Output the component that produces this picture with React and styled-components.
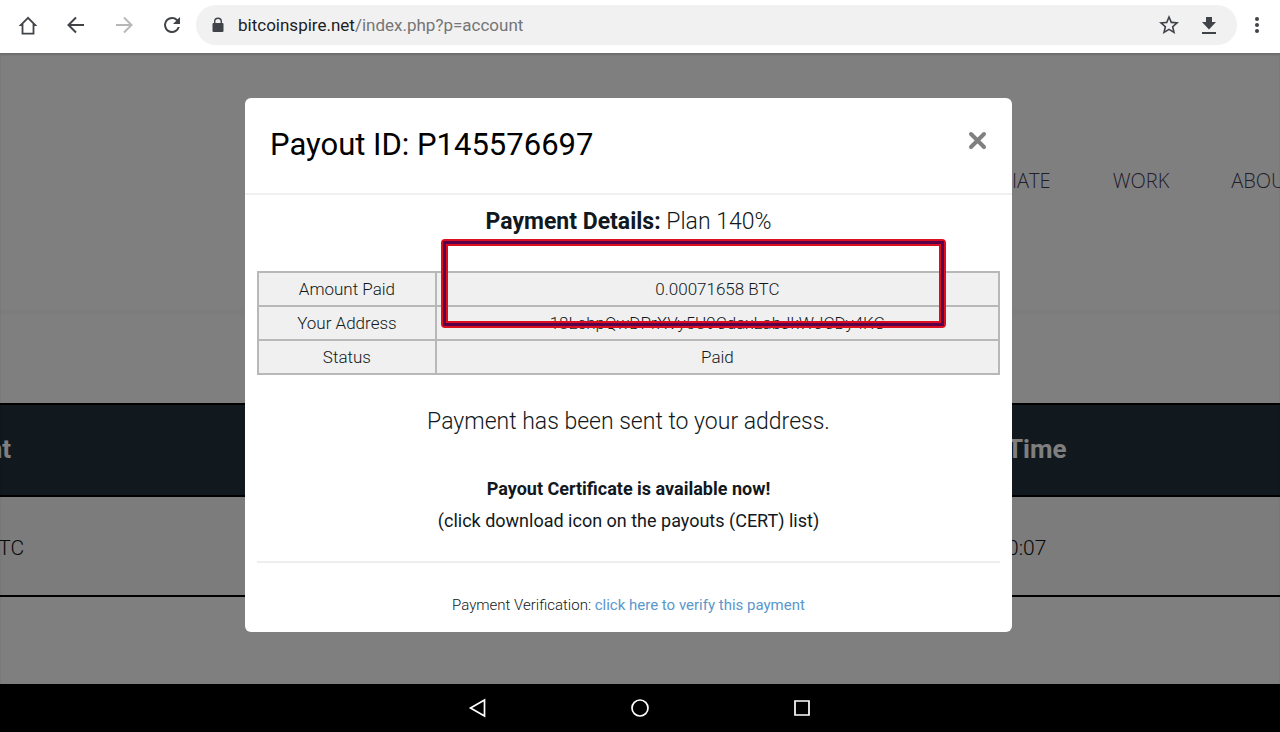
import React from 'react'
import styled, {createGlobalStyle} from 'styled-components'

const GlobalStyle = createGlobalStyle`
  * {
    box-sizing: border-box;
  }
  body {
    margin: 0;
    font-family: Roboto, "Liberation Sans", sans-serif;
    color: #111820;
    background: #000;
  }
`

const Screen = styled.div`
  display: flex;
  flex-direction: column;
  min-height: 100vh;
  overflow: hidden;
`

const BrowserBar = styled.header`
  display: flex;
  align-items: center;
  height: 53px;
  padding: 0 11px 3px 16px;
  background: #fff;
`

const IconButton = styled.button`
  display: flex;
  align-items: center;
  justify-content: center;
  width: 24px;
  height: 24px;
  padding: 0;
  border: 0;
  background: none;
  color: ${props => props.$faded ? '#b8b8b8' : '#404347'};
`

const BarButtons = styled.div`
  display: flex;
  gap: 24px;
  margin-right: 12px;
`

const AddressBar = styled.div`
  flex: 1;
  display: flex;
  align-items: center;
  height: 40px;
  padding: 0 16px 0 14px;
  margin-right: 8px;
  border-radius: 20px;
  background: #f1f1f2;
`

const Url = styled.a`
  flex: 1;
  margin-left: 12px;
  font-size: 17px;
  line-height: 24px;
  color: #757575;
  text-decoration: none;
  span {
    color: #1b1c1e;
  }
`

const AddressActions = styled.div`
  display: flex;
  gap: 16px;
`

const Viewport = styled.main`
  position: relative;
  flex: 1;
  overflow: hidden;
  background: #fff;
`

const SiteHeader = styled.div`
  height: 262px;
  padding-top: 114px;
  border-bottom: 6px solid #fafafa;
`

const SiteNav = styled.nav`
  display: flex;
  justify-content: flex-end;
  gap: 62px;
  margin-right: -16px;
`

const NavLink = styled.a`
  font-family: "Open Sans", sans-serif;
  font-size: 20px;
  font-weight: 300;
  line-height: 28px;
  color: #443c58;
  text-decoration: none;
`

const PayoutsTable = styled.table`
  width: 1900px;
  margin: 88px 0 80px -315px;
  table-layout: fixed;
  border-collapse: collapse;
  text-align: center;
  th, td {
    padding: 0;
    border-bottom: 2px solid #000;
  }
  th {
    height: 92px;
    padding-bottom: 2px;
    border-top: 2px solid #000;
    background: #22303c;
    color: #fff;
    font-size: 26px;
    font-weight: 700;
  }
  td {
    height: 100px;
    padding-top: 4px;
    background: #f8f8f8;
    color: #111;
    font-size: 21px;
    font-weight: 300;
  }
`

const Backdrop = styled.div`
  position: absolute;
  inset: 0;
  display: flex;
  align-items: flex-start;
  justify-content: center;
  padding: 45px 23px 0 0;
  background: rgba(0, 0, 0, 0.5);
  box-shadow: inset 0 2px 2px rgba(0, 0, 0, 0.15);
`

const Modal = styled.section`
  width: 60%;
  min-width: 767px;
  border-radius: 6px;
  background: #fff;
  text-align: center;
`

const ModalHeader = styled.div`
  display: flex;
  align-items: flex-start;
  justify-content: space-between;
  height: 97px;
  padding: 25px;
  border-bottom: 2px solid #f0f0f0;
`

const Title = styled.h1`
  margin: 0;
  font-size: 31px;
  font-weight: 400;
  line-height: 44px;
  color: #000;
`

const CloseButton = styled.button`
  display: flex;
  padding: 8px 0;
  border: 0;
  background: none;
  color: #808080;
`

const ModalBody = styled.div`
  padding: 11px 12px 15px;
`

const Lead = styled.p`
  margin: 0;
  font-size: 23px;
  font-weight: 300;
  line-height: 32px;
  b {
    font-weight: 700;
  }
`

const Details = styled.div`
  position: relative;
  margin: 33px 0 31px;
`

const DetailsTable = styled.table`
  width: 100%;
  border-collapse: collapse;
  background: #f0f0f0;
  th, td {
    height: 34px;
    padding: 0;
    border: 2px solid #b8b8b8;
    font-size: 17px;
    font-weight: 300;
    line-height: 24px;
  }
  th {
    width: 24%;
  }
`

const Highlight = styled.div`
  position: absolute;
  top: -32px;
  left: 184px;
  right: 54px;
  height: 89px;
  border: 2px solid #dc0f20;
  border-radius: 4px;
  &::before {
    content: '';
    position: absolute;
    inset: 0;
    border: 3px solid #58004c;
  }
  &::after {
    content: '';
    position: absolute;
    inset: 3px;
    border: 2px solid #dc0f20;
  }
`

const Certificate = styled.p`
  margin: 35px 0 24px;
  font-size: 18px;
  line-height: 32px;
`

const Divider = styled.hr`
  height: 2px;
  margin: 0;
  border: 0;
  background: #eee;
`

const Verify = styled.p`
  margin: 30px 0 0;
  font-size: 15px;
  font-weight: 300;
  line-height: 24px;
  a {
    color: #5a97cc;
    font-weight: 400;
    text-decoration: none;
  }
`

const SystemNav = styled.footer`
  display: flex;
  align-items: center;
  justify-content: center;
  gap: 138px;
  height: 48px;
  background: #000;
  button {
    color: #fff;
  }
`

const payout = [
  ['Amount Paid', '0.00071658 BTC'],
  ['Your Address', '18LchpQwDPrXVy5U9CdaxLabJkWJCDy4KG'],
  ['Status', 'Paid'],
]

const Icon = ({children, size = 24, stroke = 2, fill = 'none'}) => (
  <svg width={size} height={size} viewBox={`0 0 ${size} ${size}`} fill={fill} stroke={fill === 'none' ? 'currentColor' : 'none'} strokeWidth={stroke} aria-hidden="true">
    {children}
  </svg>
)

export default function App() {
  return (
    <Screen>
      <GlobalStyle />
      <BrowserBar>
        <BarButtons>
          <IconButton aria-label="Home">
            <Icon stroke={1.8}><path d="M12 4.800 4.800 12H6.500v8.600h11V12h1.700z" /></Icon>
          </IconButton>
          <IconButton aria-label="Back">
            <Icon><path d="M20 12H5M12 4.500 4.500 12l7.500 7.500" /></Icon>
          </IconButton>
          <IconButton aria-label="Forward" $faded>
            <Icon><path d="M4 12h15M12 4.500l7.500 7.500-7.500 7.500" /></Icon>
          </IconButton>
          <IconButton aria-label="Reload">
            <Icon fill="currentColor"><path d="M17.650 6.350A7.960 7.960 0 0 0 12 4a8 8 0 1 0 7.730 10h-2.080A6 6 0 1 1 12 6c1.660 0 3.140.69 4.220 1.780L13 11h7V4z" /></Icon>
          </IconButton>
        </BarButtons>
        <AddressBar>
          <svg width="16" height="18" viewBox="0 0 16 18" fill="#404347" aria-hidden="true">
            <path d="M12.500 7H12V5.500a4 4 0 0 0-8 0V7h-.5A1 1 0 0 0 2.500 8v7a1 1 0 0 0 1 1h9a1 1 0 0 0 1-1V8a1 1 0 0 0-1-1zM5.400 7V5.500a2.600 2.600 0 0 1 5.200 0V7z" />
          </svg>
          <Url href="#"><span>bitcoinspire.net</span>/index.php?p=account</Url>
          <AddressActions>
            <IconButton aria-label="Bookmark">
              <Icon fill="currentColor"><path d="M22 9.240l-7.190-.62L12 2 9.190 8.630 2 9.240l5.460 4.730L5.820 21 12 17.270 18.180 21l-1.630-7.030zM12 15.400l-3.760 2.270 1-4.280-3.320-2.880 4.380-.38L12 6.100l1.710 4.040 4.380.38-3.320 2.880 1 4.280z" /></Icon>
            </IconButton>
            <IconButton aria-label="Download">
              <Icon fill="currentColor"><path d="M9 4h6v5h4l-7 7.500L5 9h4zM5 19h14v2H5z" /></Icon>
            </IconButton>
          </AddressActions>
        </AddressBar>
        <IconButton aria-label="Menu">
          <Icon fill="currentColor"><circle cx="12" cy="6" r="2" /><circle cx="12" cy="12" r="2" /><circle cx="12" cy="18" r="2" /></Icon>
        </IconButton>
      </BrowserBar>

      <Viewport>
        <SiteHeader>
          <SiteNav>
            <NavLink href="#">AFFILIATE</NavLink>
            <NavLink href="#">WORK</NavLink>
            <NavLink href="#">ABOUT</NavLink>
          </SiteNav>
        </SiteHeader>
        <PayoutsTable>
          <colgroup>
            <col style={{width: 560}} />
            <col style={{width: 534}} />
            <col style={{width: 456}} />
            <col />
          </colgroup>
          <thead>
            <tr><th>Amount</th><th></th><th>Date Time</th><th></th></tr>
          </thead>
          <tbody>
            <tr><td>0.00071 BTC</td><td></td><td>10:00:07</td><td></td></tr>
          </tbody>
        </PayoutsTable>

        <Backdrop>
          <Modal role="dialog" aria-labelledby="payout-title">
            <ModalHeader>
              <Title id="payout-title">Payout ID: P145576697</Title>
              <CloseButton aria-label="Close">
                <Icon size={19} stroke={4}><path d="M3 3l13 13M16 3L3 16" strokeLinecap="round" /></Icon>
              </CloseButton>
            </ModalHeader>
            <ModalBody>
              <Lead><b>Payment Details:</b> Plan 140%</Lead>
              <Details>
                <DetailsTable>
                  <tbody>
                    {payout.map(([label, value]) => (
                      <tr key={label}><th scope="row">{label}</th><td>{value}</td></tr>
                    ))}
                  </tbody>
                </DetailsTable>
                <Highlight />
              </Details>
              <Lead>Payment has been sent to your address.</Lead>
              <Certificate>
                <b>Payout Certificate is available now!</b><br />
                (click download icon on the payouts (CERT) list)
              </Certificate>
              <Divider />
              <Verify>Payment Verification: <a href="#">click here to verify this payment</a></Verify>
            </ModalBody>
          </Modal>
        </Backdrop>
      </Viewport>

      <SystemNav>
        <IconButton aria-label="Back"><Icon stroke={1.7}><path d="M18.500 4v16L4.500 12z" /></Icon></IconButton>
        <IconButton aria-label="Home"><Icon stroke={1.7}><circle cx="12" cy="12" r="8" /></Icon></IconButton>
        <IconButton aria-label="Recent apps"><Icon stroke={1.7}><path d="M5 5h14v14H5z" /></Icon></IconButton>
      </SystemNav>
    </Screen>
  )
}
